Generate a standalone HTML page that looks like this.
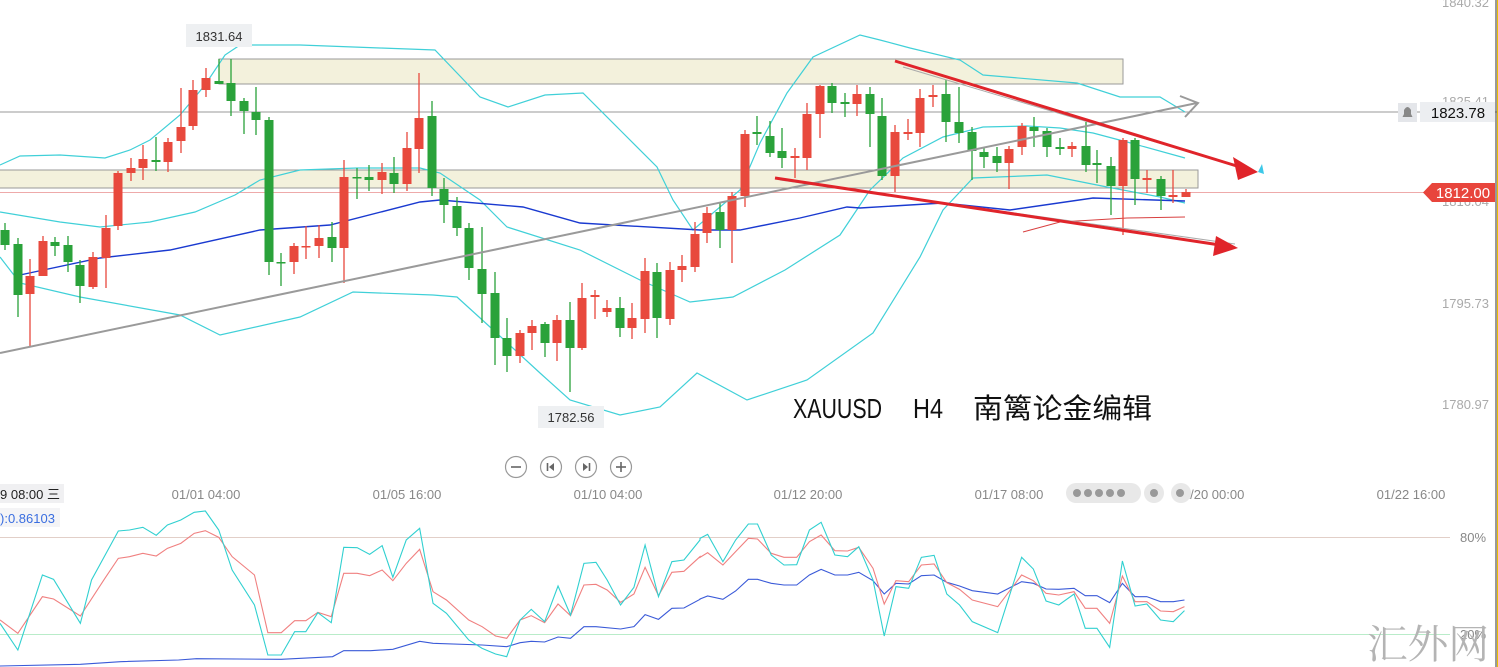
<!DOCTYPE html>
<html><head><meta charset="utf-8"><style>
html,body{margin:0;padding:0;background:#fff;width:1498px;height:667px;overflow:hidden}
svg{display:block}
</style></head><body>
<svg id="s" width="1498" height="667" xmlns="http://www.w3.org/2000/svg" font-family="Liberation Sans, sans-serif">
<rect width="1498" height="667" fill="#fff"/>
<rect x="219" y="59" width="904" height="25" fill="#f3f1dc" stroke="#999" stroke-width="1"/>
<rect x="-1" y="170" width="1199" height="18" fill="#f3f1dc" stroke="#999" stroke-width="1"/>
<line x1="0" y1="112" x2="1498" y2="112" stroke="#999" stroke-width="1"/>
<line x1="0" y1="192.5" x2="1430" y2="192.5" stroke="#eaa" stroke-width="1"/>
<g id="bands" fill="none" stroke-width="1.2"></g>
<g id="candles"></g>
<line x1="0" y1="353" x2="1197" y2="103" stroke="#9a9a9a" stroke-width="2"/>
<polyline points="1180,96 1198,103 1185,117" fill="none" stroke="#9a9a9a" stroke-width="2"/>
<line x1="903" y1="67" x2="1250" y2="170" stroke="#aaa" stroke-width="1"/>
<line x1="780" y1="180" x2="1235" y2="244" stroke="#aaa" stroke-width="1"/>
<line x1="895" y1="61" x2="1240" y2="167" stroke="#e0242a" stroke-width="3"/>
<polygon points="1258,172 1233,157 1238,180" fill="#e0242a"/>
<polygon points="1258,172 1262,164 1264,174" fill="#3cc8e8"/>
<line x1="775" y1="178" x2="1220" y2="245" stroke="#e0242a" stroke-width="3"/>
<polygon points="1238,248 1216,236 1213,256" fill="#e0242a"/>
<rect x="186" y="24" width="66" height="23" fill="#eef0f2"/>
<text x="219" y="41" font-size="13" fill="#333" text-anchor="middle">1831.64</text>
<rect x="538" y="406" width="66" height="22" fill="#eef0f2"/>
<text x="571" y="422" font-size="13" fill="#333" text-anchor="middle">1782.56</text>
<g font-size="28" fill="#111" font-family="Liberation Sans, Noto Sans CJK SC, sans-serif">
<text x="793" y="418" textLength="89" lengthAdjust="spacingAndGlyphs">XAUUSD</text>
<text x="913" y="418" textLength="30" lengthAdjust="spacingAndGlyphs">H4</text>
<text x="973" y="418" textLength="179" lengthAdjust="spacingAndGlyphs">南篱论金编辑</text>
</g>
<g font-size="13" fill="#aaa" text-anchor="end">
<text x="1489" y="7">1840.32</text>
<text x="1489" y="106">1825.41</text>
<text x="1489" y="206">1816.04</text>
<text x="1489" y="308">1795.73</text>
<text x="1489" y="409">1780.97</text>
</g>
<rect x="1398" y="103" width="19" height="19" fill="#e4e6ea"/>
<path d="M1402.5 117 L1412.5 117 L1411 114 L1411 110 Q1407.5 104 1404 110 L1404 114 Z" fill="#888"/>
<rect x="1420" y="102" width="75" height="20" fill="#eceef1"/>
<text x="1458" y="118" font-size="15" fill="#111" text-anchor="middle">1823.78</text>
<polygon points="1423,192.5 1432,183 1495,183 1495,202 1432,202" fill="#e8453c"/>
<text x="1463" y="198" font-size="15" fill="#fff" text-anchor="middle">1812.00</text>
<line x1="1496" y1="0" x2="1496" y2="667" stroke="#333" stroke-width="1"/>
<line x1="1497.5" y1="0" x2="1497.5" y2="667" stroke="#e8c000" stroke-width="1"/>
<g fill="none" stroke="#999" stroke-width="1.2">
<circle cx="516" cy="467" r="10.5"/><circle cx="551" cy="467" r="10.5"/><circle cx="586" cy="467" r="10.5"/><circle cx="621" cy="467" r="10.5"/>
</g>
<g stroke="#666" stroke-width="1.6"><line x1="511" y1="467" x2="521" y2="467"/><line x1="616" y1="467" x2="626" y2="467"/><line x1="621" y1="462" x2="621" y2="472"/><line x1="547.5" y1="463" x2="547.5" y2="471"/><line x1="589.5" y1="463" x2="589.5" y2="471"/></g>
<polygon points="554,463 554,471 549,467" fill="#666"/><polygon points="583,463 583,471 588,467" fill="#666"/>
<rect x="0" y="484" width="64" height="19" fill="#f0f0f2"/>
<text x="0" y="499" font-size="13" fill="#222" font-family="Liberation Sans, Noto Sans CJK SC, sans-serif">9 08:00 三</text>
<g font-size="13" fill="#888" text-anchor="middle">
<text x="206" y="499">01/01 04:00</text><text x="407" y="499">01/05 16:00</text><text x="608" y="499">01/10 04:00</text><text x="808" y="499">01/12 20:00</text><text x="1009" y="499">01/17 08:00</text><text x="1210" y="499">01/20 00:00</text><text x="1411" y="499">01/22 16:00</text>
</g>
<g fill="#e8e8e8"><rect x="1066" y="483" width="75" height="20" rx="10"/><circle cx="1154" cy="493" r="10"/><circle cx="1181" cy="493" r="10"/></g>
<g fill="#999"><circle cx="1077" cy="493" r="4"/><circle cx="1088" cy="493" r="4"/><circle cx="1099" cy="493" r="4"/><circle cx="1110" cy="493" r="4"/><circle cx="1121" cy="493" r="4"/><circle cx="1154" cy="493" r="4"/><circle cx="1180" cy="493" r="4"/></g>
<rect x="0" y="508" width="60" height="19" fill="#f4f4f6"/>
<text x="0" y="523" font-size="13" fill="#3a6ee0">):0.86103</text>
<line x1="0" y1="537.5" x2="1450" y2="537.5" stroke="#e2cfc8" stroke-width="1"/>
<line x1="0" y1="634.5" x2="1450" y2="634.5" stroke="#b9ecc9" stroke-width="1"/>
<text x="1460" y="542" font-size="13" fill="#888">80%</text>
<text x="1460" y="639" font-size="13" fill="#888">20%</text>
<g id="kdj" fill="none" stroke-width="1.1"></g>
<text x="1367" y="658" font-size="40" fill="#b4b4b4" font-family="Liberation Serif, Noto Serif CJK SC, serif" textLength="122" lengthAdjust="spacingAndGlyphs">汇外网</text>
</svg>
<script>
var NS="http://www.w3.org/2000/svg";
function pl(g,pts,col,w){var p=document.createElementNS(NS,"polyline");p.setAttribute("points",pts.map(function(a){return a[0]+","+a[1]}).join(" "));p.setAttribute("stroke",col);if(w)p.setAttribute("stroke-width",w);p.setAttribute("fill","none");document.getElementById(g).appendChild(p);}
pl("bands",[[0,165],[20,156],[60,155],[105,158],[130,150],[150,140],[180,115],[205,85],[225,55],[240,45],[300,45],[380,48],[435,50],[480,97],[508,107],[545,95],[583,93],[620,130],[657,167],[673,200],[693,230],[740,190],[760,143],[787,93],[813,57],[860,35],[880,40],[910,48],[960,60],[983,75],[1077,83],[1120,97],[1160,97],[1185,112]],"#40d0d8");
pl("bands",[[0,212],[60,222],[100,227],[150,222],[195,212],[235,195],[260,180],[300,170],[357,168],[420,168],[440,173],[480,200],[507,227],[580,250],[640,280],[690,302],[733,297],[785,270],[840,235],[870,190],[903,158],[943,137],[983,127],[1027,126],[1060,128],[1093,133],[1127,142],[1185,158]],"#40d0d8");
pl("bands",[[0,257],[20,283],[80,297],[180,315],[220,335],[300,317],[353,292],[433,295],[457,297],[490,327],[540,373],[570,400],[620,415],[660,407],[697,373],[747,400],[807,380],[873,333],[920,257],[943,210],[973,178],[1047,175],[1107,187],[1160,197],[1185,203]],"#40d0d8");
pl("bands",[[20,275],[100,258],[170,250],[260,230],[330,225],[420,202],[440,200],[523,207],[580,223],[700,230],[740,230],[800,218],[847,207],[860,208],[943,203],[1010,210],[1093,198],[1185,201]],"#1a3ad0",1.4);
pl("bands",[[1023,232],[1060,222],[1127,218],[1185,217]],"#d84040",1);
var C=[[5,230,245,223,250,"G"],[18,244,295,238,317,"G"],[30,276,294,259,347,"R"],[43,241,276,236,276,"R"],[55,242,246,237,256,"G"],[68,245,262,236,272,"G"],[80,265,286,260,303,"G"],[93,257,287,252,289,"R"],[106,228,258,215,288,"R"],[118,173,226,171,230,"R"],[131,168,173,158,181,"R"],[143,159,168,145,180,"R"],[156,160,162,137,171,"G"],[168,142,162,138,172,"R"],[181,127,141,88,153,"R"],[193,90,126,80,130,"R"],[206,78,90,68,97,"R"],[219,81,84,59,84,"G"],[231,83,101,59,116,"G"],[244,101,111,98,134,"G"],[256,112,120,87,135,"G"],[269,120,262,117,275,"G"],[281,262,263,253,286,"G"],[294,246,262,243,274,"R"],[306,246,247,226,259,"R"],[319,238,246,225,258,"R"],[332,237,248,222,262,"G"],[344,177,248,160,283,"R"],[357,177,178,168,199,"G"],[369,177,180,165,191,"G"],[382,172,180,163,194,"R"],[394,173,184,157,193,"G"],[407,148,184,132,191,"R"],[419,118,149,73,173,"R"],[432,116,188,101,196,"G"],[444,189,205,178,223,"G"],[457,206,228,197,236,"G"],[469,228,268,223,280,"G"],[482,269,294,227,323,"G"],[495,293,338,272,365,"G"],[507,338,356,318,372,"G"],[520,333,356,330,363,"R"],[532,326,333,320,350,"R"],[545,324,343,322,357,"G"],[557,320,343,315,361,"R"],[570,320,348,302,392,"G"],[582,298,348,283,350,"R"],[595,295,297,290,319,"R"],[607,308,312,300,317,"R"],[620,308,328,297,337,"G"],[632,318,328,303,339,"R"],[645,271,319,258,333,"R"],[657,272,318,263,338,"G"],[670,270,319,262,325,"R"],[682,266,270,255,282,"R"],[695,234,267,222,272,"R"],[707,213,233,207,243,"R"],[720,212,230,203,248,"G"],[732,196,230,192,263,"R"],[745,134,196,130,207,"R"],[757,132,134,116,145,"G"],[770,136,153,121,157,"G"],[782,151,158,128,168,"G"],[795,156,158,148,178,"R"],[807,114,158,103,170,"R"],[820,86,114,85,138,"R"],[832,86,103,83,113,"G"],[845,102,104,93,117,"G"],[857,94,104,85,116,"R"],[870,94,114,87,147,"G"],[882,116,176,98,180,"G"],[895,132,176,125,192,"R"],[908,132,134,119,140,"R"],[920,98,133,89,147,"R"],[933,95,97,85,107,"R"],[946,94,122,80,142,"G"],[959,122,133,87,143,"G"],[972,132,151,127,180,"G"],[984,152,157,147,168,"G"],[997,156,163,147,172,"G"],[1009,149,163,146,189,"R"],[1022,126,147,123,155,"R"],[1034,127,131,117,147,"G"],[1047,131,147,128,157,"G"],[1060,147,149,138,155,"G"],[1072,146,149,142,157,"R"],[1086,146,165,122,172,"G"],[1097,163,165,150,183,"G"],[1111,166,186,157,215,"G"],[1123,140,186,138,235,"R"],[1135,140,179,138,205,"G"],[1147,178,180,170,193,"R"],[1161,179,196,176,210,"G"],[1173,195,197,170,203,"R"],[1186,192,197,189,197,"R"]];
var g=document.getElementById("candles"),h="";
C.forEach(function(c){var col=c[5]=="G"?"#2aa23a":"#e8493d";h+='<line x1="'+c[0]+'" y1="'+c[3]+'" x2="'+c[0]+'" y2="'+c[4]+'" stroke="'+col+'" stroke-width="1.3"/>';var hh=Math.max(c[2]-c[1],1.5);h+='<rect x="'+(c[0]-4.5)+'" y="'+c[1]+'" width="9" height="'+hh+'" fill="'+col+'"/>';});
g.innerHTML=h;
function conv(a,ox,sx){return a.map(function(p){return [ox+p[0]/sx,450+p[1]/3]});}
var cy1=[[0,520],[40,600],[95,375],[120,388],[180,520],[205,390],[265,243],[290,240],[320,232],[350,256],[375,225],[405,210],[435,187],[460,183],[490,240],[520,360],[570,465],[600,615],[630,615],[660,545],[685,545],[712,488],[742,518],[770,292],[800,293],[828,313],[856,287],[880,382],[910,270],[940,235],[970,460],[1000,490],[1050,570],[1080,595],[1110,612],[1135,620],[1165,510],[1190,478],[1220,515],[1250,408],[1278,495],[1308,340],[1335,337],[1360,390],[1390,465],[1420,412],[1445,285],[1475,440],[1505,335],[1532,330],[1568,270]];
var cy2=[[0,265],[15,253],[45,335],[70,270],[95,222],[113,222],[140,315],[165,345],[190,344],[215,240],[238,217],[265,315],[290,320],[312,290],[340,390],[362,558],[385,410],[410,415],[435,322],[460,316],[485,432],[510,465],[535,515],[585,548],[632,322],[655,357],[680,453],[705,465],[735,432],[757,535],[780,535],[805,592],[830,333],[855,468],[878,462],[905,510],[930,515],[952,482]];
var r1=[[0,510],[40,550],[95,440],[120,447],[180,498],[235,385],[265,325],[290,320],[320,310],[350,318],[375,295],[405,280],[435,250],[460,242],[490,262],[520,320],[570,375],[600,548],[630,548],[660,512],[685,512],[712,487],[742,500],[770,370],[800,370],[828,377],[856,360],[880,392],[910,340],[940,298],[970,425],[1000,450],[1050,510],[1080,530],[1110,558],[1135,565],[1165,510],[1190,497],[1220,518],[1250,462],[1278,497],[1308,405],[1335,403],[1360,420],[1390,457],[1420,432],[1445,352],[1475,437],[1505,367],[1532,364],[1568,320]];
var r2=[[0,322],[15,308],[45,345],[70,305],[95,265],[113,267],[140,310],[165,322],[190,322],[215,275],[238,255],[265,302],[290,303],[312,292],[340,355],[362,462],[385,392],[410,395],[435,345],[460,342],[485,398],[510,418],[535,450],[585,470],[632,375],[655,392],[680,430],[705,435],[735,425],[757,475],[780,475],[805,520],[830,378],[855,455],[878,455],[905,483],[930,485],[952,470]];
var b1=[[0,648],[180,643],[270,635],[400,630],[440,626],[630,628],[745,620],[770,602],[830,602],[880,598],[940,574],[970,580],[1080,585],[1135,590],[1165,578],[1190,574],[1220,576],[1250,561],[1278,565],[1308,530],[1335,530],[1390,537],[1420,530],[1445,494],[1475,508],[1505,475],[1532,474],[1568,448]];
var b2=[[0,447],[15,438],[45,448],[70,423],[95,388],[113,388],[140,400],[165,405],[190,405],[215,375],[238,358],[265,375],[290,375],[312,367],[340,392],[362,432],[385,400],[410,402],[435,377],[460,375],[485,397],[510,408],[535,422],[585,432],[632,395],[655,400],[680,417],[705,418],[735,415],[757,437],[780,437],[805,458],[830,400],[855,440],[878,440],[905,455],[930,455],[952,450]];
var S1=2.24,S2=1.965;
pl("kdj",conv(b1,0,S1).concat(conv(b2,700,S2)),"#3a5ad8");
pl("kdj",conv(r1,0,S1).concat(conv(r2,700,S2)),"#f08080");
pl("kdj",conv(cy1,0,S1).concat(conv(cy2,700,S2)),"#30d0d0");
</script>
</body></html>
